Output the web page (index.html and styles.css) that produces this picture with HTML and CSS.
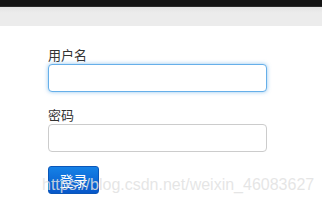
FILE: index.html
```html
<!DOCTYPE html>
<html lang="zh">
<head>
    <meta charset="UTF-8">
    <title>登录</title>
    <link rel="stylesheet" href="styles.css">
</head>
<body>
    <div class="topbar"></div>
    <div class="subbar"></div>
    <div class="main">
        <form class="login-form">
            <label class="field-label" for="username">用户名</label>
            <input class="field-input focused" id="username" type="text">
            <label class="field-label" for="password">密码</label>
            <input class="field-input" id="password" type="password">
            <button class="login-button" type="button">登录</button>
        </form>
        <!-- watermark pasted over the screenshot -->
        <div class="watermark">https://blog.csdn.net/weixin_46083627</div>
    </div>
</body>
</html>
```
FILE: styles.css
```css
body {
    margin: 0;
    padding: 0;
    background-color: #fff;
    font-family: "Liberation Sans", "Noto Sans CJK SC", sans-serif;
    overflow: hidden;
}

.topbar {
    height: 6px;
    background-color: #141414;
    border-bottom: 1px solid #2a2a2a;
}

.subbar {
    height: 19px;
    background: linear-gradient(#e4e4e4, #ececec 6px);
}

.main {
    position: relative;
    height: 178px;
    background-color: #fff;
    border-top-left-radius: 3px;
    padding: 20px 0 0 48px;
    box-sizing: border-box;
}

.login-form {
    display: flex;
    flex-direction: column;
    align-items: flex-start;
}

.field-label {
    font-family: "Noto Sans CJK SC", sans-serif;
    font-size: 13px;
    line-height: 18px;
    color: #333;
}

.field-input {
    box-sizing: border-box;
    width: 219px;
    height: 28px;
    margin: 0 0 14px 0;
    border: 1px solid #ccc;
    border-radius: 4px;
    background-color: #fff;
    outline: none;
}

.field-input.focused {
    border-color: #66afe9;
    box-shadow: 0 0 4px rgba(102, 175, 233, 0.7);
}

.login-button {
    box-sizing: border-box;
    width: 51px;
    height: 28px;
    border: 1px solid #0a56b8;
    border-radius: 3px;
    background: linear-gradient(#1581e6, #0757c9);
    color: #fff;
    font-family: "Noto Sans CJK SC", sans-serif;
    font-size: 14px;
    padding: 0;
}

.watermark {
    position: absolute;
    left: 42px;
    top: 150px;
    font-size: 16px;
    color: rgba(225, 225, 225, 0.85);
    white-space: nowrap;
}
```
